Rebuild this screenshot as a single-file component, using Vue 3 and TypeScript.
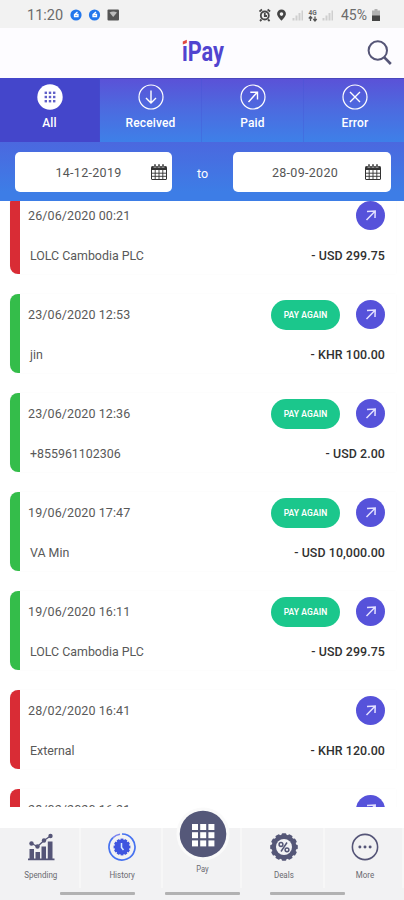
<script setup lang="ts">
interface Transaction {
  date: string
  name: string
  amount: string
  ok: boolean
}

const tabs: { label: string; icon: string }[] = [
  { label: 'All', icon: 'all' },
  { label: 'Received', icon: 'received' },
  { label: 'Paid', icon: 'paid' },
  { label: 'Error', icon: 'error' },
]

const dates: string[] = ['14-12-2019', '28-09-2020']

const transactions: Transaction[] = [
  { date: '26/06/2020 00:21', name: 'LOLC Cambodia PLC', amount: '- USD 299.75', ok: false },
  { date: '23/06/2020 12:53', name: 'jin', amount: '- KHR 100.00', ok: true },
  { date: '23/06/2020 12:36', name: '+855961102306', amount: '- USD 2.00', ok: true },
  { date: '19/06/2020 17:47', name: 'VA Min', amount: '- USD 10,000.00', ok: true },
  { date: '19/06/2020 16:11', name: 'LOLC Cambodia PLC', amount: '- USD 299.75', ok: true },
  { date: '28/02/2020 16:41', name: 'External', amount: '- KHR 120.00', ok: false },
  { date: '28/02/2020 16:21', name: '', amount: '', ok: false },
]

const nine: number[][] = [0, 1, 2].flatMap((r) => [0, 1, 2].map((c) => [c, r]))
const teeth: number[] = Array.from({ length: 12 }, (_, i) => i * 30)
</script>

<template>
  <div class="screen">
    <div class="status">
      <span class="clock">11:20</span>
      <svg class="apps" width="50" height="12" viewBox="0 0 50 12">
        <g fill="#2377ec">
          <circle cx="6" cy="6" r="5.6" />
          <circle cx="24.500" cy="6" r="5.600" />
        </g>
        <g fill="none" stroke="#fff" stroke-width="1.300">
          <path d="M7.500 3L4.500 5.500V7.500H8V5.500H5" />
          <path d="M26 3L23 5.500V7.500H26.500V5.500H23.500" />
        </g>
        <rect x="37.500" y="0.500" width="11.500" height="11" rx="1" fill="#555" />
        <path d="M39.500 3.500Q43.200 1.500 47 3.500L43.200 8Z" fill="#bbb" />
      </svg>
      <svg class="signals" width="77" height="14" viewBox="0 0 77 14">
        <g fill="none" stroke="#484848" stroke-width="1.800">
          <circle cx="5.800" cy="7.500" r="4" />
          <path d="M.5 3.500L3 1.500M8.600 1.500L11.100 3.500M5.800 5V8H8M2.500 11.500L1 13M9 11.500L10.600 13" />
        </g>
        <path d="M22.500 1.500A4.400 4.400 0 0 0 18.100 6C18.100 8.500 22.500 12.800 22.500 12.800S26.900 8.500 26.900 6A4.400 4.400 0 0 0 22.500 1.500ZM22.500 4.300A1.800 1.800 0 1 1 22.500 7.900A1.800 1.800 0 1 1 22.500 4.300Z" fill="#444" fill-rule="evenodd" />
        <g fill="#cfcfcf">
          <rect x="33.500" y="10" width="2" height="2.500" /><rect x="36.500" y="7.500" width="2" height="5" />
          <rect x="39.500" y="5" width="2" height="7.500" /><rect x="42.500" y="2.500" width="1.500" height="10" />
          <rect x="63.500" y="10" width="2" height="2.500" /><rect x="66.500" y="7.500" width="2" height="5" />
          <rect x="69.500" y="5" width="2" height="7.500" /><rect x="72.500" y="2.500" width="1.500" height="10" />
        </g>
        <text x="49.500" y="6.500" font-size="6.500" font-weight="700" fill="#666">4G</text>
        <path d="M51.500 13V9M49.800 10.500L51.500 8.500L53.200 10.500M56 8.500V12.500M54.300 11L56 13L57.700 11" fill="none" stroke="#555" stroke-width="1.300" />
      </svg>
      <span class="level">45%</span>
      <svg class="battery" width="8" height="12" viewBox="0 0 8 12">
        <path d="M2.500 0H5.500V1.500H8V12H0V1.500H2.500Z" fill="#b2b2b2" />
        <path d="M0 6.500H8V12H0Z" fill="#444" />
      </svg>
    </div>

    <header class="header">
      <svg class="logo" width="46" height="34" viewBox="0 0 46 34">
        <text x="1" y="25" textLength="42" lengthAdjust="spacingAndGlyphs" font-size="28" font-weight="700">iPay</text>
        <path d="M0 2H7V8.800H0Z" fill="#fdfcff" />
        <path d="M1.800 5.500L5.800 3.800V7L1.800 8.400Z" fill="#e0483e" />
      </svg>
      <svg class="search" width="26" height="26" viewBox="0 0 26 26" fill="none" stroke="#555577">
        <circle cx="10.800" cy="10.500" r="9.200" stroke-width="2" />
        <path d="M17.300 17.300L23.800 24" stroke-width="2.600" />
      </svg>
    </header>

    <nav class="tabs">
      <div v-for="(t, i) in tabs" :key="t.label" class="tab" :class="{ active: i === 0 }">
        <svg width="26" height="26" viewBox="0 0 26 26" fill="none" stroke="#fff" stroke-width="1.400">
          <template v-if="t.icon === 'all'">
            <circle cx="13" cy="13" r="12.700" fill="#fff" stroke="none" />
            <rect v-for="[c, r] in nine" :key="`${c}${r}`" :x="7.600 + c * 4.200" :y="7.600 + r * 4.200" width="2.400" height="2.400" fill="#6060c8" stroke="none" />
          </template>
          <circle v-else cx="13" cy="13" r="12" stroke-width="1.200" />
          <path v-if="t.icon === 'received'" d="M13 6.500V19M8 14L13 19L18 14" />
          <path v-if="t.icon === 'paid'" d="M8.500 18L17.500 8M10.300 8.300H17.500V15.500" />
          <path v-if="t.icon === 'error'" d="M8 8L18 18M18 8L8 18" />
        </svg>
        <span>{{ t.label }}</span>
      </div>
    </nav>

    <div class="range">
      <template v-for="(d, i) in dates" :key="d">
        <span v-if="i === 1" class="to">to</span>
        <div class="date" :class="{ end: i === 1 }">
          <span>{{ d }}</span>
          <svg width="16" height="16" viewBox="0 0 16 16">
            <path d="M.5 3.500Q.5 2.500 1.500 2.500H14.500Q15.500 2.500 15.500 3.500V15Q15.500 15.500 15 15.500H1Q.5 15.500 .5 15Z" fill="#fff" stroke="#333" />
            <path d="M.5 2.500H15.500V6H.5Z" fill="#333" />
            <path d="M.5 9.200H15.500M.5 12.300H15.500M4.200 6V15.500M8 6V15.500M11.800 6V15.500" stroke="#333" stroke-width=".9" />
            <path d="M4 .5V4M8 .5V4M12 .5V4" stroke="#fff" stroke-width="2.400" />
            <path d="M4 .3V3.700M8 .3V3.700M12 .3V3.700" stroke="#333" stroke-width="1.500" />
          </svg>
        </div>
      </template>
    </div>

    <main class="list">
      <article v-for="t in transactions" :key="t.date" class="card" :class="{ ok: t.ok }">
        <div class="row top">
          <span class="when">{{ t.date }}</span>
          <button v-if="t.ok" class="again">PAY AGAIN</button>
          <span class="badge">
            <svg width="29" height="29" viewBox="0 0 29 29" fill="none" stroke="#e3e0ff" stroke-width="1.500">
              <path d="M10.500 19L19 10.300M11 10.500L19.200 10L19 17" />
            </svg>
          </span>
        </div>
        <div v-if="t.name" class="row bottom">
          <span class="name">{{ t.name }}</span>
          <span class="amount">{{ t.amount }}</span>
        </div>
      </article>
    </main>

    <footer class="nav">
      <div class="item">
        <svg width="28" height="28" viewBox="0 0 28 28" fill="#555577">
          <path d="M2.500 16H7V26H2.500ZM8.500 19H13V26H8.500ZM14.500 13.500H19V26H14.500ZM20.800 8.500H25.500V26H20.800ZM1 25.500H27.500V27.300H1Z" />
          <path d="M4.500 10.500L10.500 13.500L17 7.500L23.500 3" fill="none" stroke="#555577" stroke-width="1.300" />
          <circle cx="4.500" cy="10.500" r="2.200" /><circle cx="10.500" cy="13.500" r="2.200" />
          <circle cx="17" cy="7.500" r="2.200" /><circle cx="23.500" cy="3" r="2.200" />
        </svg>
        <span>Spending</span>
      </div>
      <div class="item">
        <svg width="28" height="28" viewBox="0 0 28 28">
          <path d="M14 1A13 13 0 1 1 5 4.600" fill="none" stroke="#4672f0" stroke-width="1.700" />
          <path d="M5 4.600A13 13 0 0 1 12 1.200" fill="none" stroke="#7a83ef" stroke-width="1.500" />
          <g fill="#3f55df">
            <circle cx="14" cy="14" r="7.400" />
            <rect v-for="a in teeth" :key="a" x="12.600" y="5.600" width="2.800" height="3" :transform="`rotate(${a} 14 14)`" />
          </g>
          <path d="M13.500 10V14.500L15.500 17" fill="none" stroke="#d9edff" stroke-width="1.500" />
        </svg>
        <span>History</span>
      </div>
      <div class="item pay">
        <svg width="54" height="54" viewBox="0 0 54 54">
          <circle cx="27" cy="27" r="26.500" fill="#fafafa" />
          <circle cx="27" cy="27" r="23.300" fill="#555879" />
          <rect v-for="[c, r] in nine" :key="`${c}${r}`" :x="16 + c * 8.200" :y="17 + r * 8.200" width="6" height="6" fill="#fff" />
        </svg>
        <span>Pay</span>
      </div>
      <div class="item">
        <svg width="28" height="28" viewBox="0 0 28 28">
          <g fill="#555777">
            <circle cx="14" cy="14" r="12.400" />
            <rect v-for="a in teeth" :key="a" x="11.700" y=".2" width="4.600" height="4" rx="1" :transform="`rotate(${a} 14 14)`" />
          </g>
          <circle cx="14" cy="14" r="8" fill="#f3f3f5" />
          <g fill="none" stroke="#555777" stroke-width="1.500">
            <circle cx="11" cy="11.500" r="1.900" /><circle cx="17" cy="16.800" r="1.900" />
            <path d="M17 9.500L11 18.500" />
          </g>
        </svg>
        <span>Deals</span>
      </div>
      <div class="item">
        <svg width="30" height="30" viewBox="0 0 30 30" fill="#555577">
          <circle cx="15" cy="15" r="13.500" fill="none" stroke="#555577" stroke-width="1.700" />
          <circle cx="9.500" cy="15" r="1.600" /><circle cx="15" cy="15" r="1.600" /><circle cx="20.500" cy="15" r="1.600" />
        </svg>
        <span>More</span>
      </div>
      <div class="gestures"><i></i><i></i><i></i></div>
    </footer>
  </div>
</template>

<style>
body {
  margin: 0;
  background: #fff;
}
</style>

<style scoped>
.screen {
  width: 404px;
  height: 900px;
  overflow: hidden;
  display: flex;
  flex-direction: column;
  background: #fff;
  font-family: Roboto, "Liberation Sans", sans-serif;
}
svg {
  display: block;
  flex: none;
}
.status {
  height: 28px;
  padding: 2px 24px 0 27px;
  box-sizing: border-box;
  display: flex;
  align-items: center;
  background: #f2f2f2;
  color: #6b6b6b;
}
.clock {
  width: 43px;
  font-size: 14.5px;
}
.signals {
  margin-left: auto;
}
.level {
  width: 27px;
  margin: 0 4px 0 5px;
  font-size: 14px;
}
.header {
  height: 50px;
  display: flex;
  align-items: center;
  justify-content: center;
  position: relative;
  background: #fdfcff;
}
.logo {
  fill: #5144cf;
  margin-left: 3px;
  overflow: visible;
}
.search {
  position: absolute;
  left: 367px;
  top: 12px;
}
.tabs {
  height: 64px;
  display: grid;
  grid-template-columns: 100px 102px 102px 100px;
  background: linear-gradient(#5b51d7, #4d69df 45%, #3e80e8);
  box-shadow: inset 0 1px #4a47bd;
}
.tab {
  display: flex;
  flex-direction: column;
  align-items: center;
  padding-top: 6px;
  box-sizing: border-box;
  border-right: 1px solid rgba(67, 83, 211, 0.3);
  color: #fff;
  font-size: 12px;
  font-weight: 500;
  letter-spacing: 0.15px;
}
.tab span {
  line-height: 14px;
  margin-top: 6px;
}
.tab.active {
  background: #4446cb;
}
.tab:last-child {
  border: 0;
  padding-left: 2px;
}
.range {
  height: 59px;
  padding: 11px 13px 8px 15px;
  box-sizing: border-box;
  display: flex;
  justify-content: space-between;
  background: linear-gradient(#4b68df, #3d7de6 85%);
}
.to {
  align-self: center;
  width: 61px;
  text-align: center;
  color: #fff;
  font-size: 12.500px;
}
.date {
  width: 157px;
  height: 40px;
  margin-top: -1px;
  padding: 0 5px 0 0;
  box-sizing: border-box;
  display: flex;
  align-items: center;
  background: #fff;
  border-radius: 5px;
  color: #555;
  font-size: 12.500px;
}
.date span {
  flex: 1;
  text-align: center;
  padding-left: 11px;
  letter-spacing: 0.3px;
}
.date.end {
  width: 158px;
  padding-right: 10px;
}
.date.end span {
  padding-left: 12px;
}
.list {
  height: 606px;
  flex: none;
  overflow: hidden;
  background: #fff;
}
.card {
  height: 79px;
  margin: 0 8px 20px 10px;
  padding: 6px 11px 0 8px;
  box-sizing: border-box;
  border-left: 10px solid #d92c35;
  border-radius: 8px 0 0 8px;
  box-shadow: 0 0 1px rgba(0, 0, 0, 0.08);
}
.card.ok {
  border-left-color: #34bd4a;
}
.card:first-child {
  margin-top: -6px;
}
.row {
  display: flex;
  align-items: center;
}
.top {
  height: 29px;
}
.bottom {
  height: 20px;
  margin-top: 15px;
  justify-content: space-between;
}
.when {
  flex: 1;
  color: #595959;
  font-size: 12.500px;
  letter-spacing: 0.1px;
}
.again {
  width: 69px;
  height: 30px;
  margin-right: 16px;
  padding: 0;
  border: 0;
  border-radius: 15px;
  background: #1bc78c;
  color: #fff;
  font-family: inherit;
  font-size: 8.500px;
  font-weight: 600;
  letter-spacing: 0.1px;
}
.badge {
  border-radius: 50%;
  background: #5652da;
}
.name {
  margin-left: 2px;
  color: #595959;
  font-size: 12.400px;
}
.amount {
  color: #303030;
  font-size: 12.400px;
  font-weight: 500;
  letter-spacing: 0.08px;
}
.nav {
  height: 72px;
  flex: none;
  margin-top: 21px;
  display: grid;
  grid-template-columns: 81px 82px 79px 83px 79px;
  grid-template-rows: 60px 12px;
  background: #f2f2f3;
}
.item {
  display: flex;
  flex-direction: column;
  align-items: center;
  padding-top: 5px;
  box-sizing: border-box;
  border-right: 2px solid #f7f7f7;
  color: #6a6a70;
  font-size: 9.500px;
}
.item svg {
  height: 28px;
  margin-left: 2px;
}
.item span {
  line-height: 12px;
  margin: 8px 0 0 2px;
  transform: scaleX(0.84);
}
.item.pay {
  padding-top: 0;
}
.item.pay svg {
  height: 54px;
  margin-top: -21px;
}
.item.pay span {
  margin-top: 2px;
  font-size: 9px;
}
.gestures {
  grid-column: 1 / -1;
  display: flex;
  gap: 30px;
  padding: 4px 0 0 60px;
}
.gestures i {
  width: 75px;
  height: 3px;
  border-radius: 1px;
  background: #b2b2b2;
}
</style>
